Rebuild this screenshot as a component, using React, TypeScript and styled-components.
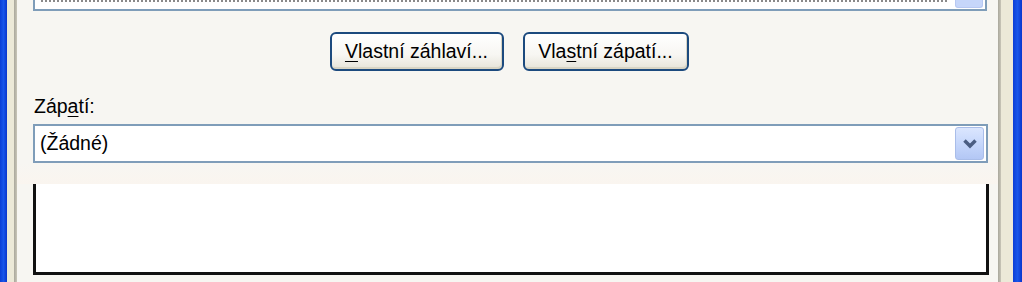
import styled, { createGlobalStyle } from "styled-components";

const Global = createGlobalStyle`
  html, body {
    margin: 0;
    padding: 0;
    background: #f7f6f2;
  }
  body {
    font-family: "Liberation Sans", Arial, sans-serif;
    font-size: 19.5px;
    color: #000;
  }
`;

const Window = styled.div`
  display: flex;
  width: 1022px;
  height: 282px;
  overflow: hidden;
`;

const Frame = styled.div<{ $side: "left" | "right" }>`
  display: flex;
  flex-direction: ${({ $side }) => ($side === "left" ? "row" : "row-reverse")};
  flex: none;
`;

const FrameBlue = styled.div<{ $w: number }>`
  width: ${({ $w }) => $w}px;
  background: linear-gradient(90deg, #0b3ed6, #1856ea 50%, #0a36cc);
`;

const FrameCream = styled.div<{ $w: number }>`
  width: ${({ $w }) => $w}px;
  background: #ece9d8;
`;

const FrameLine = styled.div`
  width: 3px;
  background: linear-gradient(90deg, #a9a79c, #c9c6b8);
`;

const Content = styled.div`
  flex: 1;
  display: flex;
  flex-direction: column;
  padding: 0 10px 0 16px;
  background: #f7f6f2;
  min-width: 0;
`;

const TopList = styled.div`
  display: flex;
  height: 11px;
  border: 2px solid #7f9db9;
  border-top: none;
  background: #fff;
  box-sizing: border-box;
  margin-right: 1px;
`;

const TopListBody = styled.div`
  flex: 1;
  border-top: 2px dotted #8a8a8a;
  margin: 0 8px 0 6px;
  height: 2px;
`;

const TopScroll = styled.div`
  width: 26px;
  height: 7px;
  margin-right: 2px;
  background: #c6d6fa;
  border: 1px solid #b7c8f2;
  border-top: none;
  border-radius: 0 0 3px 3px;
`;

const ButtonRow = styled.div`
  display: flex;
  justify-content: center;
  gap: 19px;
  margin-top: 21px;
  padding-right: 3px;
`;

const XpButton = styled.button<{ $w: number }>`
  width: ${({ $w }) => $w}px;
  height: 39px;
  box-sizing: border-box;
  border: 2px solid #1c4a7e;
  border-radius: 6px;
  background: linear-gradient(180deg, #ffffff 0%, #f7f6f2 60%, #e6e3d8 100%);
  box-shadow: inset -1px -2px 0 #d8d4c4;
  font-family: inherit;
  font-size: 19.5px;
  color: #000;
  padding: 0;
  display: flex;
  align-items: center;
  justify-content: center;
  line-height: 1;
`;

const Key = styled.span`
  text-decoration: underline;
  text-underline-offset: 3px;
`;

const Label = styled.div`
  margin-top: 24px;
  line-height: 22px;
  padding-left: 1px;
`;

const Combo = styled.div`
  display: flex;
  align-items: center;
  margin-top: 7px;
  height: 39px;
  box-sizing: border-box;
  border: 2px solid #7f9db9;
  background: #fff;
  padding: 0 2px 0 5px;
`;

const ComboText = styled.div`
  flex: 1;
`;

const DropButton = styled.div`
  width: 29px;
  height: 33px;
  box-sizing: border-box;
  border: 1px solid #a9bde9;
  border-radius: 3px;
  background: linear-gradient(180deg, #dbe6fe 0%, #c6d7fb 50%, #b3c7f5 100%);
  display: flex;
  align-items: center;
  justify-content: center;
`;

const Gap = styled.div`
  height: 21px;
  background: linear-gradient(180deg, #f7f6f2, #faf5ef);
  margin: 0 -10px 0 -16px;
`;

const Preview = styled.div`
  height: 91px;
  box-sizing: border-box;
  background: #fff;
  border: 3px solid #111;
  border-top: none;
  margin-right: -1px;
`;

export default function App() {
  return (
    <>
      <Global />
      <Window>
        <Frame $side="left">
          <FrameBlue $w={7} />
          <FrameCream $w={7} />
          <FrameLine />
        </Frame>
        <Content>
          <TopList>
            <TopListBody />
            <TopScroll />
          </TopList>
          <ButtonRow>
            <XpButton $w={174}>
              <Key>V</Key>lastní záhlaví...
            </XpButton>
            <XpButton $w={166}>
              Vla<Key>s</Key>tní zápatí...
            </XpButton>
          </ButtonRow>
          <Label>
            Záp<Key>a</Key>tí:
          </Label>
          <Combo>
            <ComboText>(Žádné)</ComboText>
            <DropButton>
              <svg width="16" height="11" viewBox="0 0 16 11">
                <path d="M2.5 2.5 L8 8 L13.5 2.5" fill="none" stroke="#4a5d82" strokeWidth="3.5" />
              </svg>
            </DropButton>
          </Combo>
          <Gap />
          <Preview />
        </Content>
        <Frame $side="right">
          <FrameBlue $w={9} />
          <FrameCream $w={12} />
          <FrameLine />
        </Frame>
      </Window>
    </>
  );
}
